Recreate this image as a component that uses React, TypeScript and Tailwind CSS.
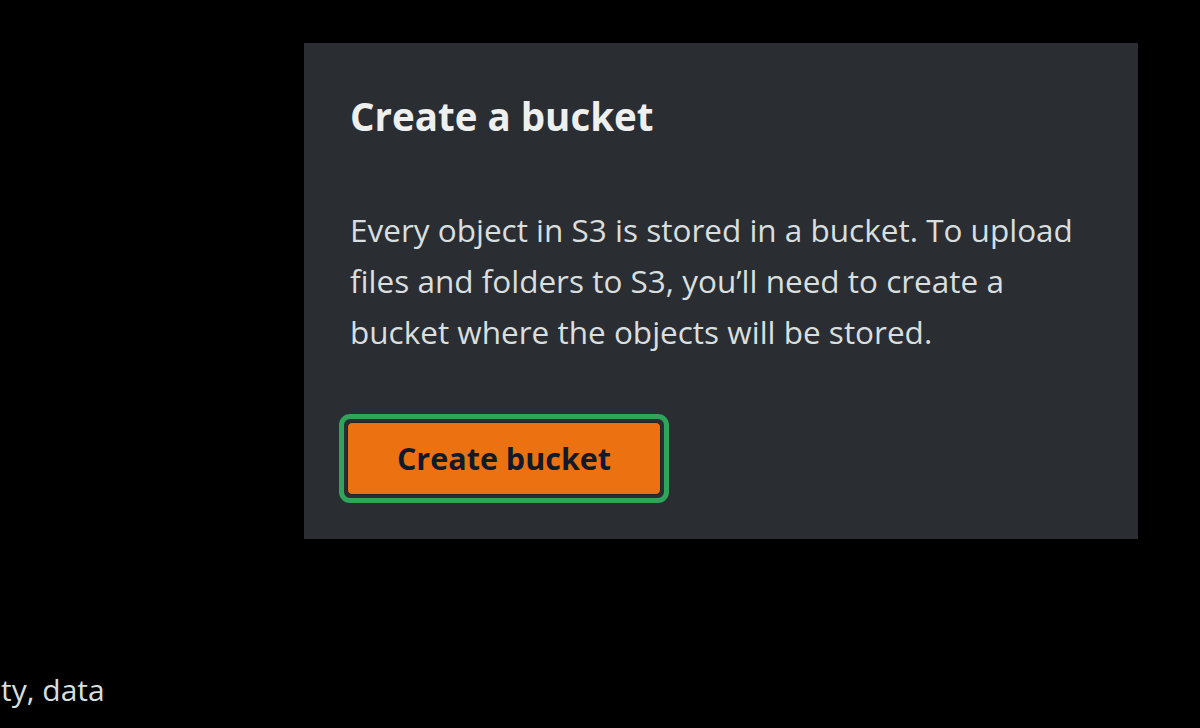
export default function App() {
  return (
    <div
      className="w-[1200px] h-[728px] bg-black overflow-hidden flex flex-col"
      style={{ fontFamily: '"Open Sans", "Noto Sans", Arial, sans-serif' }}
    >
      <div className="ml-[304px] mt-[43px] w-[834px] h-[496px] bg-[#2a2e33] pl-[46px] pt-[49px] flex flex-col shrink-0">
        <h2 className="text-[38.5px] leading-[48px] font-bold text-[#eef0f0]">Create a bucket</h2>
        <p className="mt-[64px] text-[31.5px] leading-[51px] text-[#d9dedf] whitespace-nowrap">
          Every object in S3 is stored in a bucket. To upload
          <br />
          files and folders to S3, you’ll need to create a
          <br />
          bucket where the objects will be stored.
        </p>
        <div className="mt-[57px] -ml-[11px] w-[330px] h-[89px] rounded-[11px] border-[5px] border-[#2ea55a] p-[3px] flex">
          <button className="flex-1 rounded-[5px] bg-[#ec7211] border border-[#1d232b] text-[30.5px] font-bold text-[#0f1b2a] flex items-center justify-center">
            Create bucket
          </button>
        </div>
      </div>
      <div className="mt-[125px] ml-[1px] text-[30px] leading-[51px] text-[#d9dedf] whitespace-nowrap">ty, data</div>
    </div>
  );
}
